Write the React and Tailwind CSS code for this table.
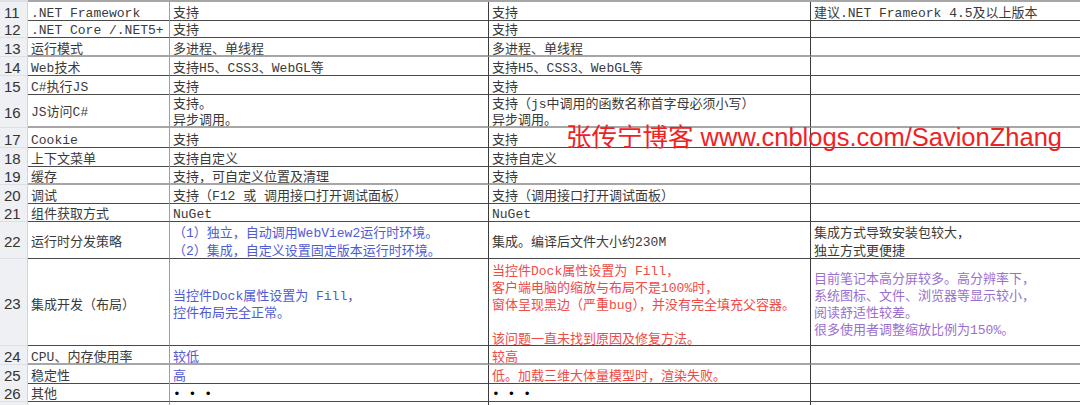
import React from 'react';

const BLUE = 'text-[#4f5bd5]';
const RED = 'text-[#f04a45]';
const PURPLE = 'text-[#9a70cf]';

const rows = [
  { n: 11, h: 'h-[17px]', line: 'dark', cells: ['.NET Framework', '支持', '支持', '建议.NET Frameork 4.5及以上版本'] },
  { n: 12, h: 'h-[19px]', line: 'dark', cells: ['.NET Core /.NET5+', '支持', '支持', ''] },
  { n: 13, h: 'h-[19px]', line: 'gray', cells: ['运行模式', '多进程、单线程', '多进程、单线程', ''] },
  { n: 14, h: 'h-[19px]', line: 'dark', cells: ['Web技术', '支持H5、CSS3、WebGL等', '支持H5、CSS3、WebGL等', ''] },
  { n: 15, h: 'h-[18px]', line: 'dark', cells: ['C#执行JS', '支持', '支持', ''] },
  { n: 16, h: 'h-[34px]', line: 'gray', lead: 'leading-[16px]', cells: ['JS访问C#', ['支持。', '异步调用。'], ['支持（js中调用的函数名称首字母必须小写）', '异步调用。'], ''] },
  { n: 17, h: 'h-[20px]', line: 'dark', cells: ['Cookie', '支持', '支持', ''] },
  { n: 18, h: 'h-[18px]', line: 'dark', cells: ['上下文菜单', '支持自定义', '支持自定义', ''] },
  { n: 19, h: 'h-[19px]', line: 'gray', cells: ['缓存', '支持，可自定义位置及清理', '支持', ''] },
  { n: 20, h: 'h-[18px]', line: 'dark', cells: ['调试', '支持（F12 或 调用接口打开调试面板）', '支持（调用接口打开调试面板）', ''] },
  { n: 21, h: 'h-[19px]', line: 'dark', cells: ['组件获取方式', 'NuGet', 'NuGet', ''] },
  {
    n: 22, h: 'h-[37px]', line: 'dark', lead: 'leading-[18px]',
    colors: ['', BLUE, '', ''],
    cells: ['运行时分发策略', ['（1）独立，自动调用WebView2运行时环境。', '（2）集成，自定义设置固定版本运行时环境。'], '集成。编译后文件大小约230M', ['集成方式导致安装包较大，', '独立方式更便捷']],
  },
  {
    n: 23, h: 'h-[87px]', line: 'dark', lead: 'leading-[17px]',
    colors: ['', BLUE, RED, PURPLE],
    cells: [
      '集成开发（布局）',
      ['当控件Dock属性设置为 Fill，', '控件布局完全正常。'],
      ['当控件Dock属性设置为 Fill，', '客户端电脑的缩放与布局不是100%时，', '窗体呈现黑边（严重bug），并没有完全填充父容器。', '\u00a0', '该问题一直未找到原因及修复方法。'],
      ['目前笔记本高分屏较多。高分辨率下，', '系统图标、文件、浏览器等显示较小，', '阅读舒适性较差。', '很多使用者调整缩放比例为150%。'],
    ],
  },
  { n: 24, h: 'h-[19px]', line: 'gray', colors: ['', BLUE, RED, ''], cells: ['CPU、内存使用率', '较低', '较高', ''] },
  { n: 25, h: 'h-[18px]', line: 'dark', colors: ['', BLUE, RED, ''], cells: ['稳定性', '高', '低。加载三维大体量模型时，渲染失败。', ''] },
  { n: 26, h: 'h-[19px]', line: 'dark', colors: ['', 'text-black', 'text-black', ''], cells: ['其他', '• • •', '• • •', ''] },
  { n: 27, h: 'h-[4px]', line: 'none', cells: ['', '', '', ''] },
];

function Cell({ value, color, lead, border }) {
  const lines = Array.isArray(value) ? value : [value];
  return (
    <div className={`flex flex-col justify-center overflow-hidden whitespace-pre pl-[3px] ${border} ${color || 'text-[#3a3a3a]'} ${lead || 'leading-[14px]'}`}>
      <div className="translate-y-[3px]">
        {lines.map((l, i) => (
          <div key={i}>{l}</div>
        ))}
      </div>
    </div>
  );
}

export default function App() {
  return (
    <div className="relative w-[1080px] h-[405px] overflow-hidden bg-white text-[13px] font-['Liberation_Mono','Noto_Sans_CJK_SC',monospace]">
      <div className="grid grid-cols-[28px_1052px] h-[2px]">
        <div className="bg-[#dcdfe5]" />
        <div className="bg-[#a6a6a6]" />
      </div>
      {rows.map((r) => {
        const line =
          r.line === 'gray'
            ? 'border-b-2 border-b-[#a6a6a6]'
            : r.line === 'dark'
            ? 'border-b border-b-[#4a4a4a]'
            : '';
        const colors = r.colors || ['', '', '', ''];
        return (
          <div key={r.n} className={`grid grid-cols-[28px_142px_319px_322px_269px] ${r.h} box-content`}>
            <div className={`flex items-center pl-[4px] pt-[3px] bg-[#eef0f4] border-r border-r-[#d0d4db] text-[15px] leading-[15px] text-[#333] font-['Liberation_Sans',sans-serif] ${r.line === 'none' ? '' : 'border-b border-b-[#dcdfe5]'}`}>
              {r.n < 27 ? r.n : ''}
            </div>
            <Cell value={r.cells[0]} color={colors[0]} lead={r.lead} border={`border-r border-r-[#4fc79a] ${line}`} />
            <Cell value={r.cells[1]} color={colors[1]} lead={r.lead} border={`border-r border-r-[#3c3c3c] ${line}`} />
            <Cell value={r.cells[2]} color={colors[2]} lead={r.lead} border={`border-r border-r-[#3c3c3c] ${line}`} />
            <Cell value={r.cells[3]} color={colors[3]} lead={r.lead} border={line} />
          </div>
        );
      })}
      <div className="absolute left-[566px] top-[122px] text-[25.5px] leading-[30px] text-[#f0221f] whitespace-nowrap font-['Liberation_Sans','Noto_Sans_CJK_SC',sans-serif]">
        张传宁博客 www.cnblogs.com/SavionZhang
      </div>
    </div>
  );
}
